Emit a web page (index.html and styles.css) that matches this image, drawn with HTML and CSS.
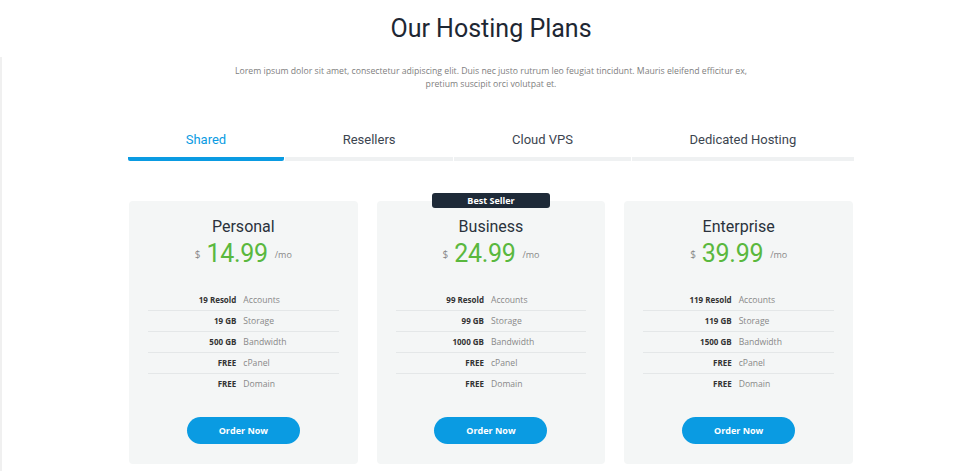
FILE: index.html
```html
<!DOCTYPE html>
<html lang="en">
<head>
<meta charset="utf-8">
<title>Our Hosting Plans</title>
<link rel="stylesheet" href="styles.css">
</head>
<body>
<div class="edge"></div>
<section class="plans">
  <h1 class="title">Our Hosting Plans</h1>
  <p class="intro">Lorem ipsum dolor sit amet, consectetur adipiscing elit. Duis nec justo rutrum leo feugiat tincidunt. Mauris eleifend efficitur ex,<br>pretium suscipit orci volutpat et.</p>
  <nav class="tabs">
    <a class="tab active">Shared</a>
    <a class="tab">Resellers</a>
    <a class="tab">Cloud VPS</a>
    <a class="tab">Dedicated Hosting</a>
  </nav>
  <div class="cards">
    <div class="card">
      <h2 class="name">Personal</h2>
      <div class="price"><span class="cur">$</span><span class="amount">14.99</span><span class="per">/mo</span></div>
      <ul class="features">
        <li><b>19 Resold</b><span>Accounts</span></li>
        <li><b>19 GB</b><span>Storage</span></li>
        <li><b>500 GB</b><span>Bandwidth</span></li>
        <li><b>FREE</b><span>cPanel</span></li>
        <li><b>FREE</b><span>Domain</span></li>
      </ul>
      <a class="order">Order Now</a>
    </div>
    <div class="card">
      <span class="badge">Best Seller</span>
      <h2 class="name">Business</h2>
      <div class="price"><span class="cur">$</span><span class="amount">24.99</span><span class="per">/mo</span></div>
      <ul class="features">
        <li><b>99 Resold</b><span>Accounts</span></li>
        <li><b>99 GB</b><span>Storage</span></li>
        <li><b>1000 GB</b><span>Bandwidth</span></li>
        <li><b>FREE</b><span>cPanel</span></li>
        <li><b>FREE</b><span>Domain</span></li>
      </ul>
      <a class="order">Order Now</a>
    </div>
    <div class="card">
      <h2 class="name">Enterprise</h2>
      <div class="price"><span class="cur">$</span><span class="amount">39.99</span><span class="per">/mo</span></div>
      <ul class="features">
        <li><b>119 Resold</b><span>Accounts</span></li>
        <li><b>119 GB</b><span>Storage</span></li>
        <li><b>1500 GB</b><span>Bandwidth</span></li>
        <li><b>FREE</b><span>cPanel</span></li>
        <li><b>FREE</b><span>Domain</span></li>
      </ul>
      <a class="order">Order Now</a>
    </div>
  </div>
</section>
</body>
</html>
```
FILE: styles.css
```css
* { box-sizing: border-box; }
html, body { margin: 0; padding: 0; background: #fff; }
body { font-family: "Open Sans", "Liberation Sans", sans-serif; color: #777; overflow: hidden; }

.edge {
  position: absolute;
  left: 0; top: 57px; bottom: 0;
  width: 2px;
  background: #f0f0f0;
}

.plans {
  width: 728px;
  margin: 0 auto;
  padding: 11px 0 0 2px;
  display: flex;
  flex-direction: column;
  align-items: stretch;
}

.title {
  margin: 0;
  text-align: center;
  font-family: "Roboto", "Liberation Sans", sans-serif;
  font-weight: 400;
  font-size: 25px;
  line-height: 36px;
  color: #1e2733;
}

.intro {
  margin: 18px 0 0;
  text-align: center;
  font-size: 8.7px;
  line-height: 13px;
  color: #808080;
}

.tabs {
  display: flex;
  margin-top: 40px;
}
.tab {
  flex: 1 1 auto;
  text-align: center;
  font-family: "Roboto", "Liberation Sans", sans-serif;
  font-size: 13px;
  line-height: 18px;
  color: #3c4550;
  padding-bottom: 8px;
  border-bottom: 4px solid #eff1f2;
}
.tab + .tab { margin-left: 1px; }
.tab.active {
  color: #0a9be2;
  border-bottom-color: #0a9be2;
  border-radius: 0 0 2px 2px;
}

.cards {
  display: grid;
  grid-template-columns: repeat(3, 1fr);
  gap: 19px;
  margin-top: 40px;
  padding: 0 1px;
}
.card {
  position: relative;
  background: #f4f6f6;
  border-radius: 4px;
  height: 263px;
  padding: 15px 19px 0;
  display: flex;
  flex-direction: column;
  align-items: center;
}
.badge {
  position: absolute;
  top: -8px;
  left: 50%;
  transform: translateX(-50%);
  width: 118px;
  height: 15px;
  background: #1e2a38;
  color: #fff;
  border-radius: 3px;
  font-size: 9px;
  font-weight: 700;
  line-height: 15px;
  text-align: center;
}
.name {
  margin: 0;
  font-family: "Roboto", "Liberation Sans", sans-serif;
  font-weight: 400;
  font-size: 16px;
  line-height: 22px;
  color: #2a323c;
}
.price {
  display: flex;
  align-items: center;
  margin-top: 0;
  height: 32px;
}
.cur { font-size: 10px; color: #888; margin-right: 6px; }
.amount {
  font-family: "Roboto", "Liberation Sans", sans-serif;
  font-size: 25px;
  letter-spacing: -0.3px;
  color: #5ab83e;
  line-height: 32px;
}
.per { font-size: 9px; color: #888; margin-left: 7px; }

.features {
  list-style: none;
  margin: 20px 0 0;
  padding: 0;
  width: 100%;
}
.features li {
  display: grid;
  grid-template-columns: 1fr 1fr;
  height: 21px;
  line-height: 20px;
  align-items: baseline;
  font-size: 8px;
  border-bottom: 1px solid #e4e7e8;
}
.features li:last-child { border-bottom: 0; }
.features b {
  text-align: right;
  padding-right: 7px;
  color: #333;
  font-weight: 700;
}
.features span { color: #888; font-size: 8.6px; }

.order {
  margin-top: 22px;
  width: 113px;
  height: 27px;
  border-radius: 14px;
  background: #0a9be2;
  color: #fff;
  font-size: 9px;
  font-weight: 700;
  line-height: 27px;
  text-align: center;
}
```
